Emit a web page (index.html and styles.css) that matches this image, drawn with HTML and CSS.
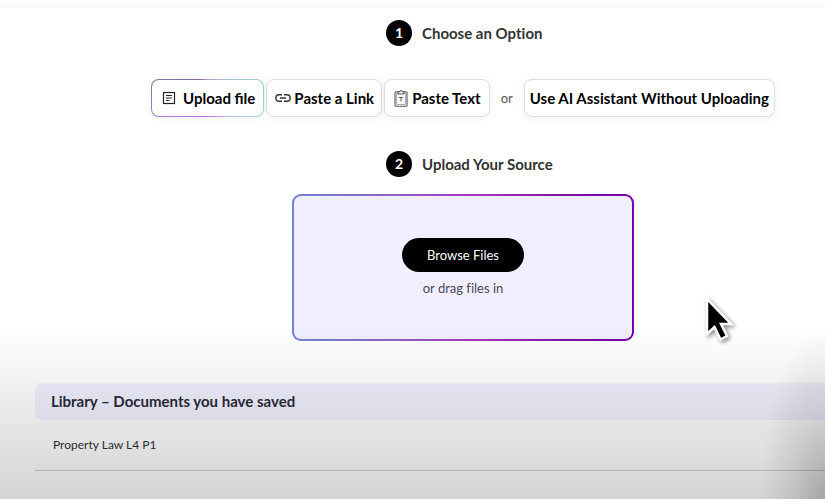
FILE: index.html
```html
<!DOCTYPE html>
<html lang="en">
<head>
<meta charset="utf-8">
<title>Upload Your Source</title>
<link rel="stylesheet" href="styles.css">
</head>
<body>
<header class="topbar"></header>
<main class="page">
  <section class="upload">
    <h2 class="step"><span class="step-number">1</span>Choose an Option</h2>
    <div class="options">
      <button class="option option-active" type="button">
        <svg class="icon" width="14" height="14" viewBox="0 0 14 14" fill="none" stroke="#222"><rect x="1.500" y="1.500" width="11" height="11" stroke-width="1.200"/><path d="M4 4.500h6M4 7h6M4 9.500h3.500" stroke-width="1"/></svg>
        Upload file
      </button>
      <button class="option option-link" type="button">
        <svg class="icon" width="16" height="14" viewBox="0 0 16 14" fill="none" stroke="#333" stroke-width="1.400"><path d="M7 3.700H4.100a3.300 3.300 0 0 0 0 6.600H7M9 3.700h2.900a3.300 3.300 0 0 1 0 6.600H9M5 7h6"/></svg>
        Paste a Link
      </button>
      <button class="option option-text" type="button">
        <svg class="icon" width="14" height="17" viewBox="0 0 14 17" fill="none" stroke="#555"><rect x="1" y="1.800" width="12" height="14.400" rx="1" stroke-width="1.100"/><rect x="2.800" y="3.600" width="8.400" height="10.800" stroke-width=".5"/><path d="M4 4V2h1.600a1.400 1.400 0 0 1 2.800 0H10v2z" fill="#fff" stroke-width="1"/><path d="M5 7.500h4M7 7.500v4" stroke-width="1"/></svg>
        Paste Text
      </button>
      <span class="or">or</span>
      <button class="option option-assistant" type="button">Use AI Assistant Without Uploading</button>
    </div>
    <h2 class="step"><span class="step-number">2</span>Upload Your Source</h2>
    <div class="dropzone">
      <button class="browse" type="button">Browse Files</button>
      <p class="hint">or drag files in</p>
    </div>
  </section>
  <section class="library">
    <h2 class="library-title">Library – Documents you have saved</h2>
    <a class="document" href="#">Property Law L4 P1</a>
  </section>
</main>
<div class="shade"></div>
<svg class="cursor" width="30" height="48" viewBox="0 0 30 48"><path d="M3 3v35l7.500-7 6 12.500 6.500-3.500-6-12H27z" fill="#000" stroke="#fff" stroke-width="2.500"/></svg>
</body>
</html>
```
FILE: styles.css
```css
* {
  box-sizing: border-box;
}

body {
  margin: 0;
  min-height: 100vh;
  background: #fff;
  color: #333;
  font-family: Lato, "Liberation Sans", sans-serif;
  font-variant-ligatures: none;
}

button {
  font-family: inherit;
  cursor: pointer;
}

.topbar {
  height: 8px;
  background: linear-gradient(#fff, #f8f8f8);
}

.page {
  padding: 12px 0 0 35px;
}

.upload {
  padding-left: 66px;
}

.step {
  display: flex;
  align-items: center;
  gap: 10px;
  width: 154px;
  margin: 0 auto;
  font-size: 15px;
  line-height: 26px;
  font-weight: 700;
  white-space: nowrap;
}

.step-number {
  flex: none;
  width: 26px;
  border-radius: 50%;
  background: #000;
  color: #fff;
  font-size: 14px;
  text-align: center;
}

.options {
  display: flex;
  justify-content: center;
  align-items: center;
  gap: 2px;
  margin: 33px 0 34px;
}

.option {
  display: flex;
  align-items: center;
  gap: 4px;
  height: 38px;
  padding: 0 8px;
  border: 1px solid #dedede;
  border-radius: 8px;
  background: #fff;
  box-shadow: 0 1px 10px rgba(0, 0, 0, 0.06);
  color: #000;
  font-size: 15px;
  font-weight: 700;
  white-space: nowrap;
}

.option-active {
  gap: 7px;
  padding: 0 8px 0 10px;
  border-color: transparent;
  background:
    linear-gradient(#fff, #fff) padding-box,
    conic-gradient(#a8a0b8, #a0c8d0 60deg, #8de0d0 90deg, #b0c8e8 120deg, #c860e0 190deg, #a880d0 245deg, #8078a0 285deg, #806090 330deg, #a8a0b8) border-box;
}

.option-link {
  gap: 3px;
  padding-right: 7px;
}

.option-text {
  padding-left: 9px;
}

.option-assistant {
  padding: 0 5px;
}

.icon {
  flex: none;
}

.or {
  margin: 0 9px;
  color: #555;
  font-size: 13px;
}

.dropzone {
  display: flex;
  flex-direction: column;
  align-items: center;
  width: 342px;
  margin: 17px auto 0;
  padding: 42px 16px;
  border: 2px solid transparent;
  border-radius: 9px;
  background:
    linear-gradient(#f1efff, #f1efff) padding-box,
    linear-gradient(90deg, #7185d0, #8d62c0 30%, #a934bd 55%, #7614a0 80%, #7a00ac) border-box;
}

.browse {
  height: 34px;
  padding: 0 25px;
  border: 0;
  border-radius: 17px;
  background: #000;
  color: #fff;
  font-size: 13px;
}

.hint {
  margin: 8px 0 0;
  color: #484858;
  font-size: 13px;
  line-height: 17px;
}

.library {
  margin-top: 42px;
}

.library-title {
  margin: 0;
  padding: 0 16px;
  border-radius: 8px 0 0 8px;
  background: #f2f1ff;
  color: #2c2b3a;
  font-size: 15px;
  line-height: 37px;
  font-weight: 700;
}

.document {
  display: block;
  padding: 0 18px;
  border-bottom: 1px solid #d0d0d0;
  color: #333;
  font-size: 12px;
  line-height: 50px;
  text-decoration: none;
}

/* Vignette over the lower part of the window */
.shade {
  position: fixed;
  inset: 0;
  pointer-events: none;
  background:
    radial-gradient(ellipse 65px 170px at 100% 100%, rgba(0, 0, 0, 0.22), rgba(0, 0, 0, 0.09) 50%, transparent),
    linear-gradient(transparent 65%, rgba(0, 0, 0, 0.04) 74%, rgba(0, 0, 0, 0.11) 87%, rgba(0, 0, 0, 0.17));
}

.cursor {
  position: fixed;
  top: 296px;
  left: 704px;
  filter: drop-shadow(2px 2px 2px rgba(0, 0, 0, 0.45));
  pointer-events: none;
}
```
